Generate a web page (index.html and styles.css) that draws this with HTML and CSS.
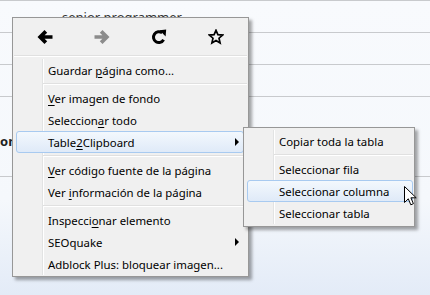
FILE: index.html
```html
<!DOCTYPE html>
<html lang="es">
<head>
  <meta charset="UTF-8" />
  <title>Menú contextual</title>
  <link rel="stylesheet" href="styles.css">
</head>
<body>
  <div class="table">
    <div class="row"><span class="cell-text job">senior programmer</span></div>
    <div class="row"></div>
    <div class="row"></div>
    <div class="row tall"><span class="cell-text bold">on</span></div>
  </div>

  <div class="menu main-menu">
    <div class="toolbar">
      <svg class="tb-icon" viewBox="0 0 16 16"><path d="M0.5 8 L7.5 1 L10.2 3.7 L7.6 6.3 H15.5 V9.7 H7.6 L10.2 12.3 L7.5 15 Z" fill="#000"/></svg>
      <svg class="tb-icon" viewBox="0 0 16 16"><path d="M15.5 8 L8.5 1 L5.8 3.7 L8.4 6.3 H0.5 V9.7 H8.4 L5.8 12.3 L8.5 15 Z" fill="#8c8c8c"/></svg>
      <svg class="tb-icon" viewBox="0 0 16 16"><path d="M12.6 10.8 A5.4 5.4 0 1 1 11.2 3.9" fill="none" stroke="#000" stroke-width="3"/><path d="M8.6 1.2 L15.2 0.6 L14.6 7.4 Z" fill="#000"/></svg>
      <svg class="tb-icon" viewBox="0 0 16 16"><path d="M8 1.3 L9.9 5.7 L14.6 6.1 L11 9.2 L12.1 13.9 L8 11.4 L3.9 13.9 L5 9.2 L1.4 6.1 L6.1 5.7 Z" fill="none" stroke="#000" stroke-width="1.7" stroke-linejoin="miter"/></svg>
    </div>
    <div class="sep full"></div>
    <div class="list">
      <div class="item"><span>Guardar <u>p</u>ágina como...</span></div>
      <div class="sep"></div>
      <div class="item"><span><u>V</u>er imagen de fondo</span></div>
      <div class="item"><span>Seleccion<u>a</u>r todo</span></div>
      <div class="item hover"><span>Table<u>2</u>Clipboard</span><span class="arrow"></span></div>
      <div class="sep"></div>
      <div class="item"><span><u>V</u>er código fuente de la página</span></div>
      <div class="item"><span>Ver <u>i</u>nformación de la página</span></div>
      <div class="sep"></div>
      <div class="item"><span>Inspecci<u>o</u>nar elemento</span></div>
      <div class="item"><span>SEOquake</span><span class="arrow"></span></div>
      <div class="item"><span>Adblock Plus: bloquear imagen...</span></div>
    </div>
  </div>

  <div class="menu sub-menu">
    <div class="list">
      <div class="item"><span>Copiar toda la tabla</span></div>
      <div class="sep"></div>
      <div class="item"><span>Seleccionar fila</span></div>
      <div class="item hover"><span>Seleccionar columna</span></div>
      <div class="item"><span>Seleccionar tabla</span></div>
    </div>
  </div>

  <svg class="cursor" width="14" height="21" viewBox="0 0 14 21"><path d="M0.5 0.5 V16.5 L4.3 12.8 L6.8 18.8 L9.4 17.7 L6.9 11.8 H12.2 Z" fill="#fff" stroke="#000" stroke-width="1" stroke-linejoin="miter"/></svg>
</body>
</html>
```

FILE: styles.css
```css
body {
  margin: 0;
  width: 430px;
  height: 295px;
  overflow: hidden;
  position: relative;
  font-family: "Segoe UI", "Noto Sans", sans-serif;
  font-size: 11.4px;
  color: #000;
  background: linear-gradient(#f8fafd 0, #f5f8fc 200px, #e3ebf7 295px);
}

/* page behind the menu */
.table { border-top: 1px solid #c8cacd; }
.row { height: 31px; border-bottom: 1px solid #c8cacd; display: flex; align-items: center; }
.row.tall { height: 80px; padding-top: 8px; box-sizing: border-box; }
.cell-text { font-size: 13px; color: #333; }
.job { padding-left: 62px; }
.bold { font-weight: bold; color: #222; }

/* context menus */
.menu {
  position: absolute;
  box-sizing: border-box;
  background: #f0f0f0;
  border: 1px solid #979797;
  box-shadow: 3px 3px 3px rgba(0, 0, 0, 0.35);
}
.main-menu { left: 12px; top: 17px; width: 237px; height: 260px; }
.sub-menu { left: 243px; top: 127px; width: 172px; height: 100px; padding-top: 2px; }

.toolbar {
  height: 37px;
  display: grid;
  grid-template-columns: repeat(4, 1fr);
  align-items: center;
  justify-items: center;
  padding: 0 4px 0 3px;
}
.tb-icon { width: 16px; height: 16px; }

.sep {
  height: 1px;
  background: #e0e0e0;
  border-bottom: 1px solid #fff;
  margin: 2px 1px 2px 30px;
}
.sep.full { margin: 0 1px 2px 1px; }

.list {
  background: linear-gradient(to right, transparent 29px, #e2e3e3 29px, #e2e3e3 30px, #fff 30px, #fff 31px, transparent 31px);
}
.main-menu .list { height: 216px; }

.item {
  height: 22px;
  box-sizing: border-box;
  display: flex;
  align-items: center;
  padding-left: 31px;
  margin: 0 4px 0 3px;
  border: 1px solid transparent;
  border-radius: 3px;
  white-space: nowrap;
}
.sub-menu .item { margin-right: 1px; }
.item u { text-underline-offset: 2px; }
.item.hover {
  border-color: #a8caf0;
  background: linear-gradient(#f3f8fd, #dfeaf8);
}

.arrow {
  margin-left: auto;
  margin-right: 4px;
  width: 0;
  height: 0;
  border-top: 4px solid transparent;
  border-bottom: 4px solid transparent;
  border-left: 4px solid #000;
}

.cursor { position: absolute; left: 404px; top: 186px; }
```
